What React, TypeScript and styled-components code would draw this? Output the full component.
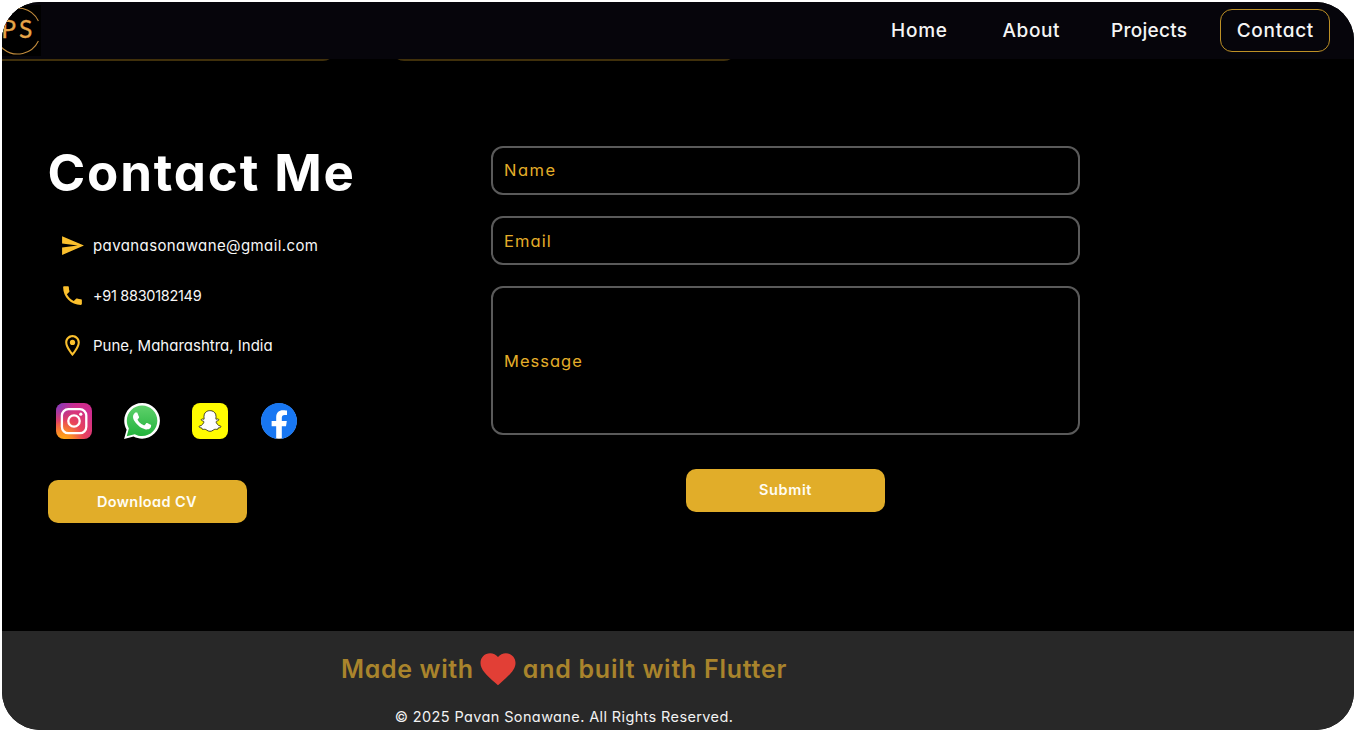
import React from "react";
import styled, { createGlobalStyle } from "styled-components";
import { FaSnapchatGhost } from "react-icons/fa";

const GlobalStyle = createGlobalStyle`
  *, *::before, *::after { box-sizing: border-box; }
  body {
    margin: 0;
    background: #fff;
    font-family: Inter, "Open Sans", sans-serif;
    font-feature-settings: "cv11" 1, "calt" 0;
  }
  input, textarea, button { font: inherit; font-feature-settings: inherit; }
`;

const Page = styled.div`
  width: 1356px;
  height: 732px;
  padding: 2px;
`;

const Frame = styled.div`
  display: flex;
  flex-direction: column;
  width: 1352px;
  height: 728px;
  border-radius: 38px;
  overflow: hidden;
  background: #000;
`;

const Header = styled.header`
  display: flex;
  justify-content: space-between;
  align-items: center;
  height: 57px;
  padding-right: 24px;
  background: #06050b;
`;

const Logo = styled.div`
  width: 39px;
  height: 51px;
  background: #000;
`;

const Nav = styled.nav`
  display: flex;
  gap: 18px;
`;

const NavLink = styled.a<{ $width: number; $spacing: number; $active?: boolean }>`
  display: flex;
  align-items: center;
  justify-content: center;
  width: ${(p) => p.$width}px;
  height: 43px;
  border: 1px solid ${(p) => (p.$active ? "#bd9026" : "transparent")};
  border-radius: 12px;
  color: #f5f5f5;
  font-size: 19px;
  font-weight: 550;
  letter-spacing: ${(p) => p.$spacing}px;
  text-indent: ${(p) => p.$spacing}px;
`;

const CardStrip = styled.div`
  display: flex;
  align-items: flex-end;
  gap: 57px;
  height: 2px;
  overflow: hidden;
`;

const CardEdge = styled.div<{ $width: number; $first?: boolean }>`
  flex: none;
  width: ${(p) => p.$width}px;
  height: 30px;
  border: 2px solid #40300b;
  border-radius: ${(p) => (p.$first ? "0 0 12px 0" : "12px")};
`;

const Main = styled.main`
  display: flex;
  flex: 1;
  padding: 84px 0 0 45px;
`;

const Info = styled.section`
  display: flex;
  flex-direction: column;
  align-items: flex-start;
  width: 444px;
`;

const Title = styled.h1`
  margin: 1px 0 0 0.5px;
  height: 54px;
  line-height: 54px;
  font-size: 51px;
  font-weight: 690;
  letter-spacing: 1.85px;
  white-space: nowrap;
  color: #fff;
`;

const ContactList = styled.ul`
  list-style: none;
  margin: 21px 0 0;
  padding: 0 0 0 13px;
`;

const ContactRow = styled.li<{ $spacing: number; $size?: number }>`
  display: flex;
  align-items: center;
  gap: 8px;
  height: 49.8px;
  color: #f7f7f7;
  font-size: ${(p) => p.$size ?? 15}px;
  letter-spacing: ${(p) => p.$spacing}px;
  svg { width: 25px; height: 25px; fill: #fbc02d; }
`;

const Socials = styled.div`
  display: flex;
  gap: 32.4px;
  margin: 32.6px 0 0 8.5px;
  svg { display: block; width: 36px; height: 36px; }
`;

const SnapTile = styled.div`
  display: flex;
  align-items: center;
  justify-content: center;
  width: 36px;
  height: 36px;
  border-radius: 8px;
  background: #fffc00;
  svg { width: 22px; height: 22px; fill: #fff; stroke: #111; stroke-width: 18px; overflow: visible; }
`;

const GoldButton = styled.button<{ $spacing: number }>`
  width: 199px;
  height: 43px;
  padding: 0 0 2px;
  border: 0;
  border-radius: 10px;
  background: #e1ad29;
  color: #fffdf5;
  font-size: 14.5px;
  font-weight: 570;
  letter-spacing: ${(p) => p.$spacing}px;
`;

const Download = styled(GoldButton)`
  margin: 41px 0 0 0.5px;
  padding: 0;
`;

const Form = styled.form`
  display: flex;
  flex-direction: column;
  align-items: center;
  width: 589px;
  padding-top: 1px;
`;

const Field = styled.input<{ $spacing: number; $lift?: number }>`
  display: block;
  width: 100%;
  height: 49px;
  margin-bottom: 21px;
  padding: 0 11px ${(p) => p.$lift ?? 0}px;
  border: 2px solid #5a5a5a;
  border-radius: 12px;
  background: transparent;
  font-size: 16.5px;
  letter-spacing: ${(p) => p.$spacing}px;
  &::placeholder { color: #e4ae29; opacity: 1; }
`;

const MessageField = styled(Field)`
  height: 149px;
  margin-bottom: 34px;
  padding: 63px 11px 0;
  line-height: 20px;
  resize: none;
`;

const Footer = styled.footer`
  display: flex;
  flex-direction: column;
  align-items: center;
  height: 99px;
  padding: 16px 228px 0 0;
  background: #282828;
`;

const Credit = styled.div`
  display: flex;
  align-items: center;
  gap: 3.5px;
  height: 43px;
  color: #a9842c;
  font-size: 25px;
  font-weight: 640;
  white-space: nowrap;
  svg { width: 42px; height: 42px; fill: #e23f36; }
`;

const CreditText = styled.span<{ $spacing: number }>`
  letter-spacing: ${(p) => p.$spacing}px;
`;

const Copyright = styled.div`
  margin-top: 17px;
  height: 20px;
  line-height: 20px;
  color: #f2f2f2;
  font-size: 14.5px;
  letter-spacing: 0.38px;
`;

const LogoMark = () => (
  <svg width="39" height="51" viewBox="2 4 39 51" fill="none">
    <path d="M38.4 20A23 23 0 1 0 38.4 40" stroke="#c18b3c" strokeWidth="1.1" />
    <text x="1.2" y="37.3" fill="#e6a548" stroke="#e6a548" strokeWidth="0.3" fontFamily="Lato" fontSize="24.5" letterSpacing="3">PS</text>
  </svg>
);

const Instagram = () => (
  <svg viewBox="0 0 36 36">
    <defs>
      <radialGradient id="igWarm" cx="0.2" cy="1.05" r="1.05">
        <stop offset="0" stopColor="#ffb010" />
        <stop offset="0.25" stopColor="#fb8a28" />
        <stop offset="0.55" stopColor="#e8435a" />
        <stop offset="1" stopColor="#cf2c8e" />
      </radialGradient>
      <radialGradient id="igCool" cx="0" cy="0" r="0.6">
        <stop offset="0" stopColor="#7040c8" />
        <stop offset="1" stopColor="#a030b0" stopOpacity="0" />
      </radialGradient>
    </defs>
    <rect width="36" height="36" rx="8" fill="url(#igWarm)" />
    <rect width="36" height="36" rx="8" fill="url(#igCool)" />
    <g fill="none" stroke="#fff" strokeWidth="2.3">
      <rect x="5.9" y="6.2" width="24.4" height="24" rx="6.4" />
      <circle cx="18" cy="18" r="5.7" />
    </g>
    <circle cx="24.8" cy="11.2" r="1.6" fill="#fff" />
  </svg>
);

const bubble =
  "M.057 24l1.687-6.163c-1.041-1.804-1.588-3.849-1.587-5.946.003-6.556 5.338-11.891 11.893-11.891 3.181.001 6.167 1.24 8.413 3.488 2.245 2.248 3.481 5.236 3.48 8.414-.003 6.557-5.338 11.892-11.893 11.892-1.99-.001-3.951-.5-5.688-1.448l-6.305 1.654z";

const WhatsApp = () => (
  <svg viewBox="0 0 24 24">
    <defs>
      <linearGradient id="waGreen" x1="0" y1="0" x2="0" y2="1">
        <stop offset="0" stopColor="#5fd16b" />
        <stop offset="1" stopColor="#22b23c" />
      </linearGradient>
    </defs>
    <path d={bubble} fill="#fff" />
    <path d={bubble} fill="url(#waGreen)" transform="translate(1.75 1.7) scale(.855)" />
    <path
      fill="#fff"
      d="M17.472 14.382c-.297-.149-1.758-.867-2.03-.967-.273-.099-.471-.148-.67.15-.197.297-.767.966-.94 1.164-.173.199-.347.223-.644.075-.297-.15-1.255-.463-2.39-1.475-.883-.788-1.48-1.761-1.653-2.059-.173-.297-.018-.458.13-.606.134-.133.298-.347.446-.52.149-.174.198-.298.298-.497.099-.198.05-.371-.025-.52-.075-.149-.669-1.612-.916-2.207-.242-.579-.487-.5-.669-.51-.173-.008-.371-.01-.57-.01-.198 0-.52.074-.792.372-.272.297-1.04 1.016-1.04 2.479 0 1.462 1.065 2.875 1.213 3.074.149.198 2.096 3.2 5.077 4.487.709.306 1.262.489 1.694.625.712.227 1.36.195 1.871.118.571-.085 1.758-.719 2.006-1.413.248-.694.248-1.289.173-1.413-.074-.124-.272-.198-.57-.347"
    />
  </svg>
);

const Facebook = () => (
  <svg viewBox="0 0 24 24">
    <circle cx="12" cy="12.07" r="11.8" fill="#fff" />
    <path
      fill="#1877f2"
      d="M24 12.073c0-6.627-5.373-12-12-12s-12 5.373-12 12c0 5.99 4.388 10.954 10.125 11.854v-8.385H7.078v-3.47h3.047V9.43c0-3.007 1.792-4.669 4.533-4.669 1.312 0 2.686.235 2.686.235v2.953H15.83c-1.491 0-1.956.925-1.956 1.874v2.25h3.328l-.532 3.47h-2.796v8.385C19.612 23.027 24 18.062 24 12.073z"
    />
  </svg>
);

export default function App() {
  return (
    <Page>
      <GlobalStyle />
      <Frame>
        <Header>
          <Logo><LogoMark /></Logo>
          <Nav>
            <NavLink $width={94} $spacing={0.7}>Home</NavLink>
            <NavLink $width={94} $spacing={0.55}>About</NavLink>
            <NavLink $width={106} $spacing={0.25}>Projects</NavLink>
            <NavLink $width={110} $spacing={0.72} $active>Contact</NavLink>
          </Nav>
        </Header>
        <CardStrip>
          <CardEdge $width={333} $first />
          <CardEdge $width={344} />
        </CardStrip>
        <Main>
          <Info>
            <Title>Contact Me</Title>
            <ContactList>
              <ContactRow $spacing={0.4}>
                <svg viewBox="0 0 24 24"><path d="M2.01 21L23 12 2.01 3 2 10l15 2-15 2z" /></svg>
                <span>pavanasonawane@gmail.com</span>
              </ContactRow>
              <ContactRow $spacing={-0.3} $size={14.5}>
                <svg viewBox="0 0 24 24"><path d="M6.62 10.79c1.44 2.83 3.76 5.14 6.59 6.59l2.2-2.2c.27-.27.67-.36 1.02-.24 1.12.37 2.33.57 3.57.57.55 0 1 .45 1 1V20c0 .55-.45 1-1 1-9.39 0-17-7.61-17-17 0-.55.45-1 1-1h3.5c.55 0 1 .45 1 1 0 1.25.2 2.45.57 3.57.11.35.03.74-.25 1.02l-2.2 2.2z" /></svg>
                <span>+91 8830182149</span>
              </ContactRow>
              <ContactRow $spacing={0}>
                <svg viewBox="0 0 24 24"><path d="M12 2C8.13 2 5 5.13 5 9c0 5.25 7 13 7 13s7-7.75 7-13c0-3.87-3.13-7-7-7zM7 9c0-2.76 2.24-5 5-5s5 2.24 5 5c0 2.88-2.88 7.19-5 9.88C9.92 16.21 7 11.85 7 9z" /><circle cx="12" cy="9" r="2.5" /></svg>
                <span>Pune, Maharashtra, India</span>
              </ContactRow>
            </ContactList>
            <Socials>
              <Instagram />
              <WhatsApp />
              <SnapTile><FaSnapchatGhost /></SnapTile>
              <Facebook />
            </Socials>
            <Download type="button" $spacing={0.4}>Download CV</Download>
          </Info>
          <Form>
            <Field placeholder="Name" $spacing={1.5} $lift={1} />
            <Field placeholder="Email" $spacing={1.1} />
            <MessageField as="textarea" placeholder="Message" $spacing={1} />
            <GoldButton type="button" $spacing={0.65}>Submit</GoldButton>
          </Form>
        </Main>
        <Footer>
          <Credit>
            <CreditText $spacing={0.65}>Made with</CreditText>
            <svg viewBox="0 0 24 24"><path d="M12 21.35l-1.45-1.32C5.4 15.36 2 12.28 2 8.5 2 5.42 4.42 3 7.5 3c1.74 0 3.41.81 4.5 2.09C13.09 3.81 14.76 3 16.5 3 19.58 3 22 5.42 22 8.5c0 3.78-3.4 6.86-8.55 11.54L12 21.35z" /></svg>
            <CreditText $spacing={0.73}>and built with Flutter</CreditText>
          </Credit>
          <Copyright>© 2025 Pavan Sonawane. All Rights Reserved.</Copyright>
        </Footer>
      </Frame>
    </Page>
  );
}
